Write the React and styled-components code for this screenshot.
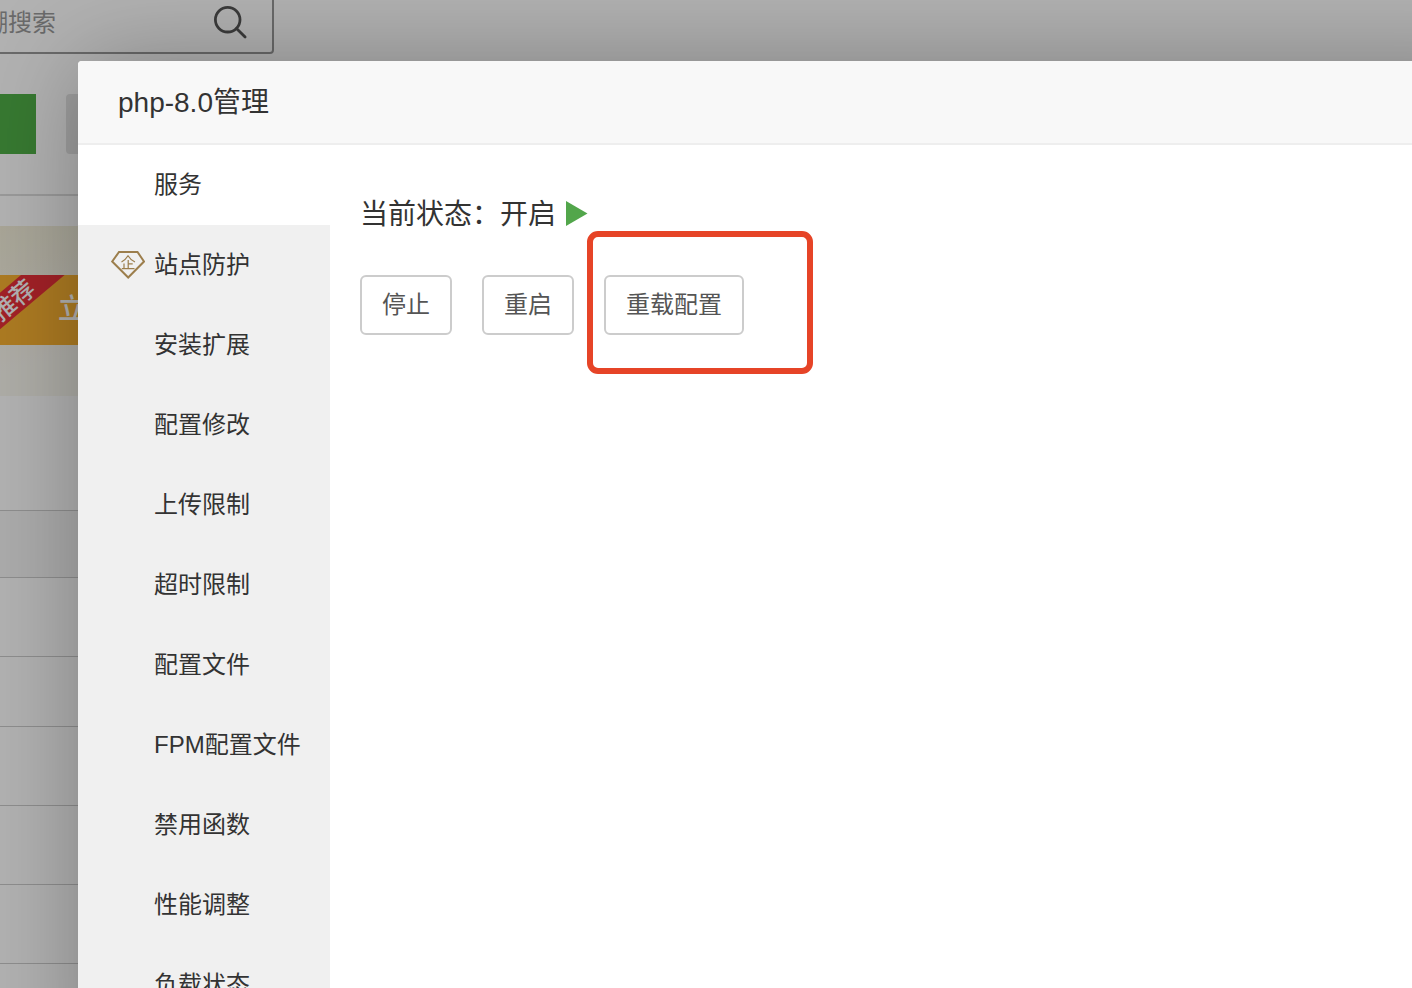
import React, { useState } from 'react';
import styled, { createGlobalStyle } from 'styled-components';

const GlobalStyle = createGlobalStyle`
  * {
    box-sizing: border-box;
  }

  body {
    margin: 0;
    overflow: hidden;
    color: #333;
    background: #fff;
    font-family: 'Liberation Sans', 'Noto Sans CJK SC', sans-serif;
    font-size: 24px;
    line-height: 36px;
  }

  button,
  input {
    font: inherit;
  }
`;

const Screen = styled.div`
  position: relative;
  height: 100vh;
  overflow: hidden;
`;

/* the software list is scrolled a little under the dialog */
const Page = styled.main`
  margin: -8px 0 0 -60px;
`;

const SearchBox = styled.form`
  display: flex;
  align-items: center;
  width: 334px;
  height: 62px;
  padding: 0 24px 0 18px;
  border: 2px solid #999;
  border-radius: 4px;
`;

const SearchInput = styled.input`
  flex: 1;
  min-width: 0;
  padding: 0;
  border: 0;
  outline: 0;
  background: none;

  &::placeholder {
    color: #999;
    opacity: 1;
  }
`;

const IconButton = styled.button`
  display: flex;
  padding: 0;
  border: 0;
  background: none;
  color: #555;
`;

const Toolbar = styled.div`
  display: flex;
  gap: 30px;
  margin-top: 40px;
  padding-bottom: 40px;
  border-bottom: 2px solid #ddd;
`;

const ToolButton = styled.button`
  width: ${({ $wide }) => ($wide ? '150px' : '96px')};
  height: 60px;
  border: 0;
  border-radius: ${({ $wide }) => ($wide ? '4px' : '0')};
  background: ${({ $color }) => $color};
`;

const Banner = styled.section`
  margin-top: 30px;
  padding: 49px 0 51px;
  background: linear-gradient(165deg, #f1ecd6, #faf8f0 160px);
`;

const BuyButton = styled.button`
  position: relative;
  display: block;
  width: 260px;
  height: 70px;
  padding: 0 0 0 118px;
  overflow: hidden;
  border: 0;
  background: #f8b032;
  color: #fff;
  font-size: 28px;
  font-weight: 500;
  text-align: left;
`;

const Ribbon = styled.span`
  position: absolute;
  top: 11px;
  left: -7px;
  width: 160px;
  height: 28px;
  background: #e83038;
  font-size: 24px;
  line-height: 30px;
  text-align: center;
  transform: rotate(-40deg);
`;

const List = styled.div`
  margin-top: 114px;
`;

const ListRow = styled.div`
  height: ${({ $height }) => $height}px;
  border-top: 1px solid #ccc;
  background: ${({ $head }) => ($head ? '#f6f6f6' : '#fff')};
`;

const Shade = styled.div`
  position: absolute;
  inset: 0;
  background: rgba(0, 0, 0, 0.3);
`;

const Dialog = styled.div`
  position: absolute;
  top: 61px;
  right: -100px;
  bottom: -100px;
  left: 78px;
  display: flex;
  flex-direction: column;
  overflow: hidden;
  border-radius: 4px;
  background: #fff;
  box-shadow: 2px 2px 100px rgba(0, 0, 0, 0.3);
`;

const DialogTitle = styled.h1`
  margin: 0;
  padding: 2px 40px 0;
  border-bottom: 2px solid #eee;
  background: #f8f8f8;
  font-size: 28px;
  font-weight: 400;
  line-height: 80px;
`;

const DialogBody = styled.div`
  display: flex;
  flex: 1;
  min-height: 0;
`;

const Menu = styled.nav`
  display: flex;
  flex: none;
  flex-direction: column;
  width: 252px;
  background: #f0f0f0;
`;

const MenuItem = styled.button`
  display: flex;
  flex: none;
  align-items: center;
  height: 80px;
  padding: 0;
  border: 0;
  background: ${({ $active }) => ($active ? '#fff' : 'transparent')};
  color: #333;
  white-space: nowrap;
`;

const MenuIcon = styled.span`
  display: flex;
  flex: none;
  justify-content: flex-end;
  width: 76px;
  padding-right: 9px;
`;

const Panel = styled.section`
  flex: 1;
  padding: 49px 30px;
`;

const Status = styled.p`
  display: flex;
  align-items: center;
  gap: 10px;
  margin: 0;
  font-size: 28px;
  line-height: 42px;
`;

const Actions = styled.div`
  display: flex;
  gap: 30px;
  margin-top: 39px;
`;

const ActionButton = styled.button`
  height: 60px;
  padding: 0 20px;
  border: 2px solid #ccc;
  border-radius: 6px;
  background: #fff;
  color: #555;
`;

const Marked = styled.div`
  position: relative;
  display: flex;

  &::after {
    content: '';
    position: absolute;
    top: -44px;
    left: -17px;
    box-sizing: border-box;
    width: 226px;
    height: 143px;
    border: 6px solid #e64427;
    border-radius: 11px;
    pointer-events: none;
  }
`;

const SearchIcon = () => (
  <svg width="34" height="34" viewBox="0 0 34 34" fill="none" stroke="currentColor" strokeWidth="2.8">
    <circle cx="13.700" cy="13.700" r="12.300" />
    <path d="M22.500 22.500l8.600 8.600" strokeLinecap="round" />
  </svg>
);

const EnterpriseIcon = () => (
  <svg width="34" height="30" viewBox="0 0 34 30" fill="none" stroke="#9c7e4c">
    <path d="M8 2h18.500l6.500 9.500L17.200 27.500 1.200 11.500z" strokeWidth="2" />
    <path d="M10.500 12Q14.500 10 17 5.800Q19.500 10 24 12M17.200 10v8.500M17.200 13.800h4.500M13 13.500v5M10.800 18.600h12.700" strokeWidth="1.200" />
  </svg>
);

const PlayIcon = () => (
  <svg width="22" height="28" viewBox="0 0 22 28">
    <path d="M0 0L21.500 12.500 0 25z" fill="#52a64b" />
  </svg>
);

const rows = [79, 70, 79, 79, 79, 79];

const menu = [
  '服务',
  '站点防护',
  '安装扩展',
  '配置修改',
  '上传限制',
  '超时限制',
  '配置文件',
  'FPM配置文件',
  '禁用函数',
  '性能调整',
  '负载状态',
];

const App = () => {
  const [active, setActive] = useState('服务');

  return (
    <Screen>
      <GlobalStyle />
      <Page>
        <SearchBox>
          <SearchInput type="text" aria-label="搜索" placeholder="模糊搜索" />
          <IconButton type="button" aria-label="搜索">
            <SearchIcon />
          </IconButton>
        </SearchBox>
        <Toolbar>
          <ToolButton $color="#4fae47" aria-label="全部" />
          <ToolButton $wide $color="#e4e4e4" aria-label="分类" />
        </Toolbar>
        <Banner>
          <BuyButton>
            <Ribbon>推荐</Ribbon>
            立即
          </BuyButton>
        </Banner>
        <List>
          <ListRow $head $height={67} />
          {rows.map((height, i) => (
            <ListRow key={i} $height={height} />
          ))}
        </List>
      </Page>
      <Shade />
      <Dialog role="dialog" aria-labelledby="dialog-title">
        <DialogTitle id="dialog-title">php-8.0管理</DialogTitle>
        <DialogBody>
          <Menu>
            {menu.map(name => (
              <MenuItem key={name} type="button" $active={name === active} onClick={() => setActive(name)}>
                <MenuIcon>{name === '站点防护' && <EnterpriseIcon />}</MenuIcon>
                {name}
              </MenuItem>
            ))}
          </Menu>
          <Panel>
            <Status>
              当前状态：开启
              <PlayIcon />
            </Status>
            <Actions>
              <ActionButton type="button">停止</ActionButton>
              <ActionButton type="button">重启</ActionButton>
              <Marked>
                <ActionButton type="button">重载配置</ActionButton>
              </Marked>
            </Actions>
          </Panel>
        </DialogBody>
      </Dialog>
    </Screen>
  );
};

export default App;
